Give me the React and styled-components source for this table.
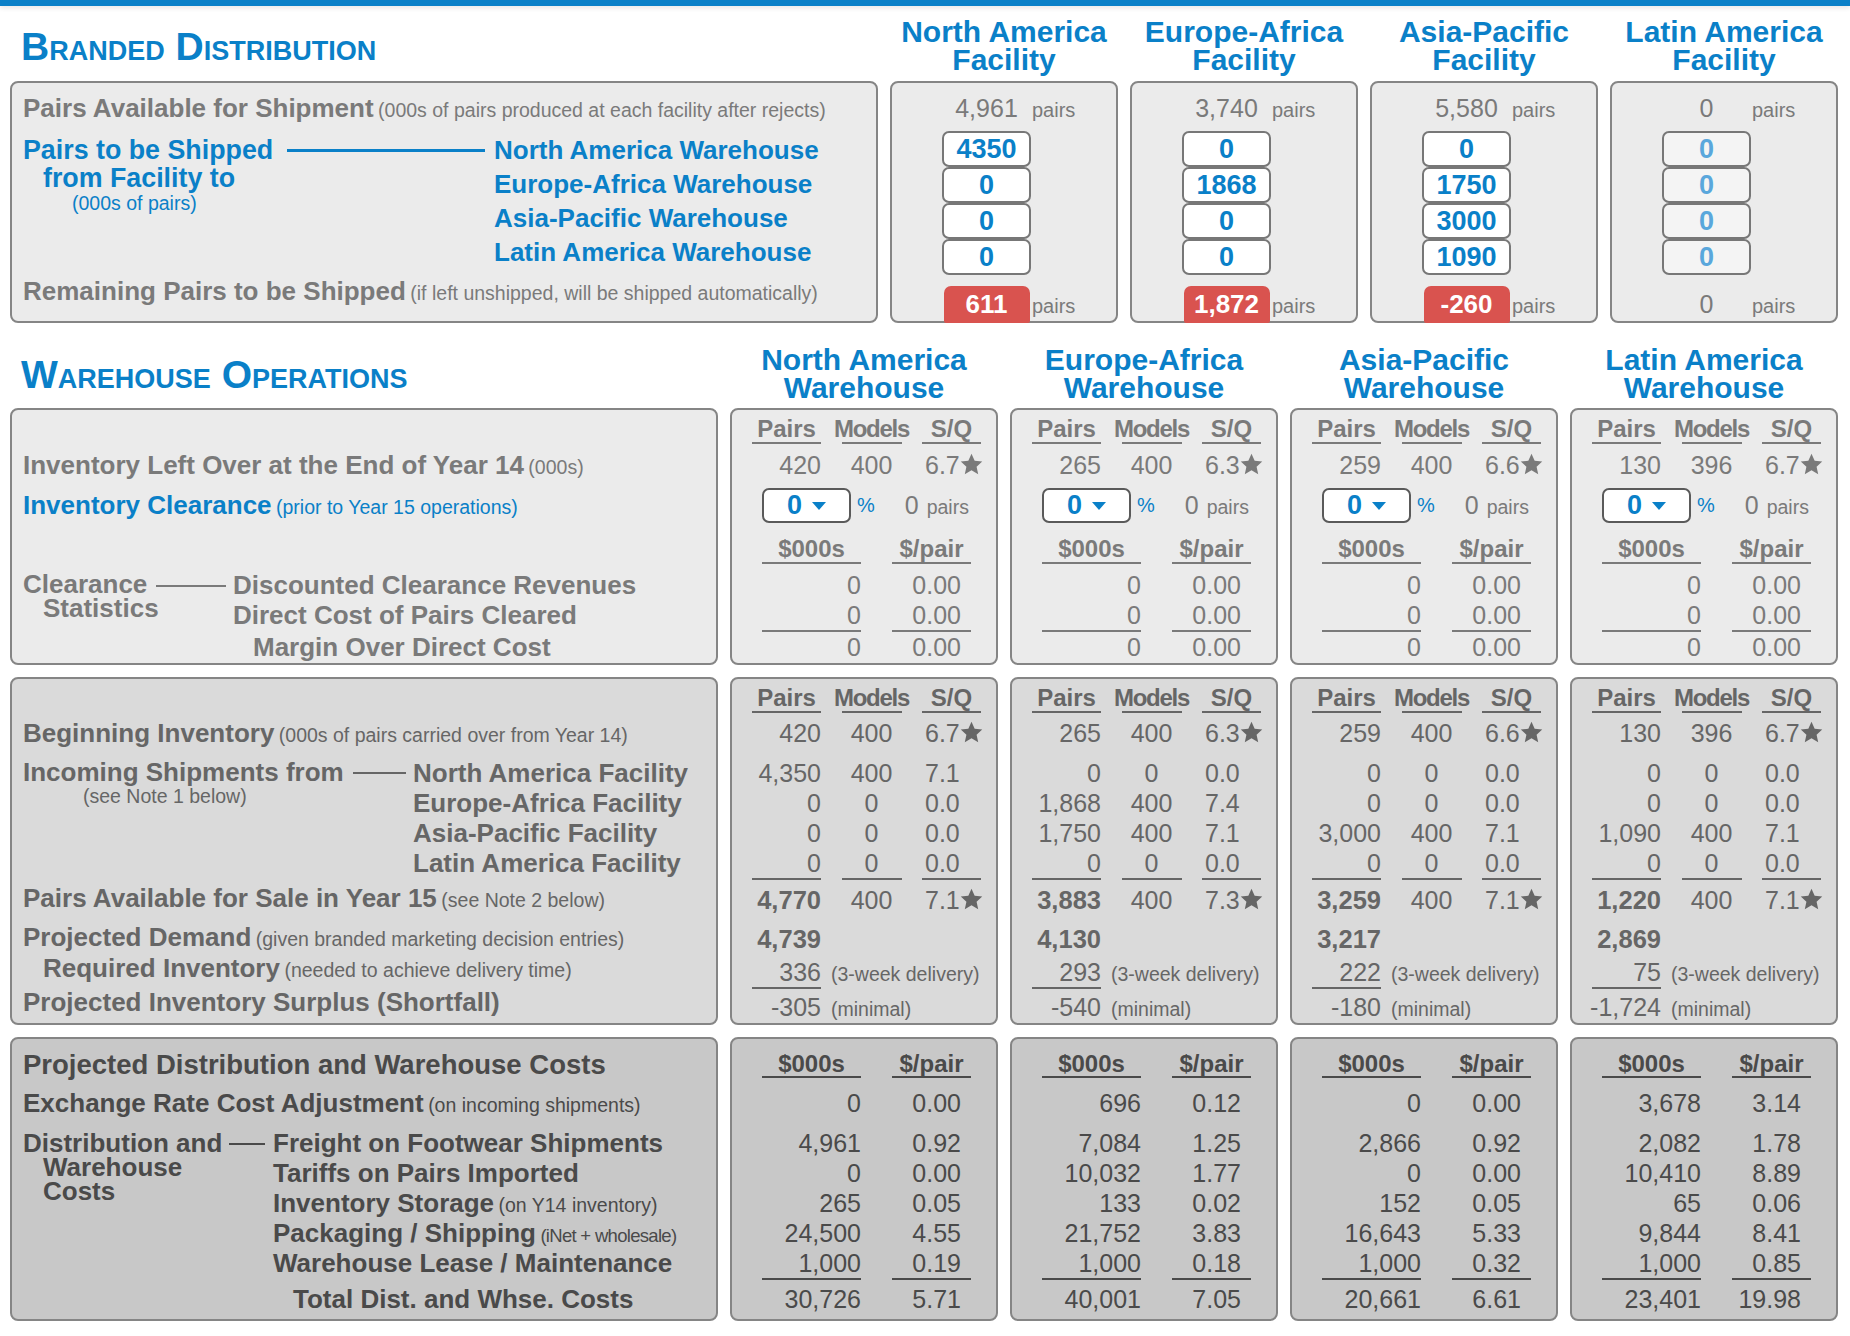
import React from 'react';
import styled, { createGlobalStyle } from 'styled-components';

const BLUE = '#0a80c8';

const tones = {
  light: { bg: '#ebebeb', fg: '#7a7a7a' },
  mid: { bg: '#dadada', fg: '#666666' },
  dark: { bg: '#c8c8c8', fg: '#4a4a4a' },
};

const facilities = [
  { name: 'North America', avail: '4,961', ship: ['4350', '0', '0', '0'], remain: '611', red: true },
  { name: 'Europe-Africa', avail: '3,740', ship: ['0', '1868', '0', '0'], remain: '1,872', red: true },
  { name: 'Asia-Pacific', avail: '5,580', ship: ['0', '1750', '3000', '1090'], remain: '-260', red: true },
  { name: 'Latin America', avail: '0', ship: ['0', '0', '0', '0'], remain: '0', off: true },
];

const warehouses = [
  {
    name: 'North America', left: ['420', '400', '6.7'],
    incoming: [['4,350', '400', '7.1'], ['0', '0', '0.0'], ['0', '0', '0.0'], ['0', '0', '0.0']],
    avail: ['4,770', '400', '7.1'], demand: '4,739', req: '336', surplus: '-305',
    fx: ['0', '0.00'],
    costs: [['4,961', '0.92'], ['0', '0.00'], ['265', '0.05'], ['24,500', '4.55'], ['1,000', '0.19']],
    total: ['30,726', '5.71'],
  },
  {
    name: 'Europe-Africa', left: ['265', '400', '6.3'],
    incoming: [['0', '0', '0.0'], ['1,868', '400', '7.4'], ['1,750', '400', '7.1'], ['0', '0', '0.0']],
    avail: ['3,883', '400', '7.3'], demand: '4,130', req: '293', surplus: '-540',
    fx: ['696', '0.12'],
    costs: [['7,084', '1.25'], ['10,032', '1.77'], ['133', '0.02'], ['21,752', '3.83'], ['1,000', '0.18']],
    total: ['40,001', '7.05'],
  },
  {
    name: 'Asia-Pacific', left: ['259', '400', '6.6'],
    incoming: [['0', '0', '0.0'], ['0', '0', '0.0'], ['3,000', '400', '7.1'], ['0', '0', '0.0']],
    avail: ['3,259', '400', '7.1'], demand: '3,217', req: '222', surplus: '-180',
    fx: ['0', '0.00'],
    costs: [['2,866', '0.92'], ['0', '0.00'], ['152', '0.05'], ['16,643', '5.33'], ['1,000', '0.32']],
    total: ['20,661', '6.61'],
  },
  {
    name: 'Latin America', left: ['130', '396', '6.7'],
    incoming: [['0', '0', '0.0'], ['0', '0', '0.0'], ['1,090', '400', '7.1'], ['0', '0', '0.0']],
    avail: ['1,220', '400', '7.1'], demand: '2,869', req: '75', surplus: '-1,724',
    fx: ['3,678', '3.14'],
    costs: [['2,082', '1.78'], ['10,410', '8.89'], ['65', '0.06'], ['9,844', '8.41'], ['1,000', '0.85']],
    total: ['23,401', '19.98'],
  },
];

const GlobalStyle = createGlobalStyle`
  * { box-sizing: border-box; }
  body {
    margin: 0;
    background: #fff;
    font-family: "Liberation Sans", Arial, Helvetica, sans-serif;
  }
`;

const TopBar = styled.div`
  height: 6px;
  background: ${BLUE};
  box-shadow: 0 2px 5px rgba(0, 0, 0, 0.1);
`;

const Page = styled.div`
  width: 1850px;
  padding: 0 12px 15px 10px;
`;

const Columns = styled.div`
  display: grid;
  grid-template-columns: ${({ $label }) => $label}px repeat(4, ${({ $col }) => $col}px);
  column-gap: 12px;
  margin-top: ${({ $mt }) => $mt || 0}px;
  height: ${({ $h }) => ($h ? `${$h}px` : 'auto')};
`;

const SectionTitle = styled.h2`
  margin: 0;
  padding-left: 11px;
  align-self: center;
  font-size: 39px;
  line-height: 39px;
  font-weight: 700;
  font-variant: small-caps;
  color: ${BLUE};
  white-space: nowrap;
`;

const ColHead = styled.h3`
  margin: 0;
  text-align: center;
  font-size: 30px;
  line-height: 28px;
  font-weight: 700;
  color: ${BLUE};
  white-space: nowrap;
`;

const Panel = styled.div`
  height: ${({ $h }) => $h}px;
  padding: ${({ $pt }) => $pt || 0}px 0 0 ${({ $pl }) => $pl || 0}px;
  border: 2px solid #858585;
  border-radius: 8px;
  background: ${({ $tone }) => tones[$tone].bg};
  color: ${({ $tone }) => tones[$tone].fg};
`;

/* label side */
const Row = styled.div`
  height: ${({ $h }) => $h || 30}px;
  line-height: ${({ $h }) => $h || 30}px;
  margin-top: ${({ $mt }) => $mt || 0}px;
  padding-left: ${({ $indent }) => $indent || 0}px;
  color: ${({ $blue }) => ($blue ? BLUE : 'inherit')};
  white-space: nowrap;
`;

const Strong = styled.span`
  font-size: ${({ $size }) => $size || 26}px;
  font-weight: 700;
`;

const Note = styled.span`
  font-size: ${({ $size }) => $size || 19.5}px;
  font-weight: 400;
  letter-spacing: ${({ $tight }) => ($tight ? '-0.7px' : 'normal')};
`;

const Bracket = styled.div`
  display: flex;
  margin-top: ${({ $mt }) => $mt || 0}px;
  color: ${({ $blue }) => ($blue ? BLUE : 'inherit')};
`;

const Lead = styled.div`
  flex: none;
  width: ${({ $w }) => $w}px;
  padding-top: ${({ $pt }) => $pt || 0}px;
  font-size: ${({ $size }) => $size || 26}px;
  font-weight: 700;
  line-height: ${({ $lh }) => $lh || 24}px;
  white-space: nowrap;
`;

const LeadLine = styled.div`
  padding-left: ${({ $indent }) => $indent || 0}px;
  ${({ $note, $lh }) => $note && `font-size: 19.5px; font-weight: 400; line-height: ${$lh}px;`}
`;

const Dash = styled.span`
  flex: none;
  width: ${({ $w }) => $w}px;
  height: ${({ $t }) => $t || 2}px;
  margin: ${({ $top }) => $top}px ${({ $r }) => $r}px 0 ${({ $l }) => $l || 0}px;
  background: currentColor;
`;

const Items = styled.div`
  display: flex;
  flex-direction: column;
  padding-top: ${({ $pt }) => $pt || 0}px;
`;

/* facility side */
const FacLine = styled.div`
  display: grid;
  grid-template-columns: 89px auto;
  align-items: baseline;
  height: ${({ $h }) => $h}px;
  line-height: ${({ $h }) => $h}px;
  margin-top: ${({ $mt }) => $mt || 0}px;
  padding-left: 50px;
  white-space: nowrap;
`;

const Amount = styled.span`
  justify-self: center;
  font-size: 25px;
`;

const Unit = styled.span`
  font-size: ${({ $size }) => $size || 20}px;
  padding-left: 1px;
`;

const QtyStack = styled.div`
  display: flex;
  flex-direction: column;
  width: 89px;
  margin: 5px 0 0 50px;
`;

const Qty = styled.input`
  display: block;
  width: 89px;
  height: 36px;
  padding: 0;
  border: 2px solid #777;
  border-radius: 7px;
  background: ${({ $off }) => ($off ? '#f4f4f4' : '#fff')};
  color: ${({ $off }) => ($off ? '#5aa7dc' : BLUE)};
  font: 700 27px/32px "Liberation Sans", Arial, sans-serif;
  text-align: center;
  outline: none;
`;

const Badge = styled.span`
  justify-self: center;
  display: inline-block;
  width: 86px;
  height: 37px;
  line-height: 37px;
  border-radius: 7px 7px 2px 2px;
  background: #d9534f;
  color: #fff;
  font-size: 26px;
  font-weight: 700;
  text-align: center;
`;

/* warehouse value side */
const Trio = styled.div`
  display: grid;
  grid-template-columns: 69px 60px 59px;
  column-gap: 20.5px;
  padding-left: 20px;
  margin-top: ${({ $mt }) => $mt || 0}px;
`;

const Duo = styled.div`
  display: grid;
  grid-template-columns: 99px 79px;
  column-gap: 31px;
  padding-left: 30px;
  margin-top: ${({ $mt }) => $mt || 0}px;
`;

const Head = styled.div`
  display: flex;
  justify-content: center;
  height: ${({ $h }) => $h || 26}px;
  line-height: ${({ $h }) => $h || 26}px;
  font-size: 24px;
  font-weight: 700;
  letter-spacing: ${({ $tight }) => ($tight ? '-1.3px' : 'normal')};
  border-bottom: 2px solid currentColor;
  box-sizing: content-box;
  white-space: nowrap;
`;

const Cell = styled.div`
  display: flex;
  justify-content: ${({ $a }) => ($a === 'l' ? 'flex-start' : $a === 'c' ? 'center' : 'flex-end')};
  height: 30px;
  line-height: 30px;
  padding: 0 ${({ $pr }) => $pr || 0}px 0 ${({ $pl }) => $pl || 0}px;
  font-size: ${({ $bold }) => ($bold ? 25.5 : 25)}px;
  font-weight: ${({ $bold }) => ($bold ? 700 : 400)};
  border-bottom: ${({ $rule }) => ($rule ? '2px solid currentColor' : '0')};
  box-sizing: content-box;
  white-space: nowrap;
`;

const StarIcon = styled.svg`
  flex: none;
  align-self: flex-start;
  width: 23px;
  height: 23px;
  margin-top: 3px;
`;

const ClearRow = styled.div`
  display: flex;
  align-items: center;
  height: 39px;
  margin-top: 6px;
  padding-left: 30px;
  white-space: nowrap;
`;

const Drop = styled.div`
  display: flex;
  align-items: center;
  justify-content: center;
  gap: 10px;
  width: 89px;
  height: 35px;
  border: 2px solid #5a5a5a;
  border-radius: 7px;
  background: #fff;
  color: ${BLUE};
  font-size: 27px;
  font-weight: 700;
`;

const Pct = styled.span`
  margin-left: 6px;
  font-size: 20px;
  color: ${BLUE};
`;

const Leftover = styled.span`
  margin-left: 30px;
  font-size: 25px;
`;

const Split = styled.div`
  display: flex;
  align-items: baseline;
  padding-left: 20px;
  margin-top: ${({ $mt }) => $mt || 0}px;
  white-space: nowrap;
`;

const SplitCell = styled(Cell)`
  flex: none;
  width: 69px;
`;

const SplitNote = styled.span`
  margin-left: 10px;
  font-size: 19.5px;
`;

const Caret = () => (
  <svg width="14" height="8" viewBox="0 0 14 8">
    <path d="M0 0h14L7 8z" fill="currentColor" />
  </svg>
);

const Star = () => (
  <StarIcon viewBox="0 0 24 24">
    <path
      d="M12 .8l3.3 7.3 7.9.8-5.9 5.4 1.7 7.8L12 18.1l-7 4 1.7-7.8L.8 8.9l7.9-.8z"
      fill="currentColor"
    />
  </StarIcon>
);

const SQ = ({ v, bold }) => (
  <Cell $a="l" $pl={3} $bold={bold}>
    {v}
    <Star />
  </Cell>
);

const FacilityPanel = ({ f }) => (
  <Panel $h={242} $pt={7} $tone="light">
    <FacLine $h={36}>
      <Amount>{f.avail}</Amount>
      <Unit>pairs</Unit>
    </FacLine>
    <QtyStack>
      {f.ship.map((v, i) => (
        <Qty key={i} defaultValue={v} readOnly $off={f.off} />
      ))}
    </QtyStack>
    <FacLine $h={37} $mt={11}>
      {f.red ? <Badge>{f.remain}</Badge> : <Amount>{f.remain}</Amount>}
      <Unit>pairs</Unit>
    </FacLine>
  </Panel>
);

const ClearancePanel = ({ w }) => (
  <Panel $h={257} $pt={6} $tone="light">
    <Trio>
      <Head>Pairs</Head>
      <Head $tight>Models</Head>
      <Head>S/Q</Head>
    </Trio>
    <Trio $mt={6}>
      <Cell>{w.left[0]}</Cell>
      <Cell $a="c">{w.left[1]}</Cell>
      <SQ v={w.left[2]} />
    </Trio>
    <ClearRow>
      <Drop>
        <span>0</span>
        <Caret />
      </Drop>
      <Pct>%</Pct>
      <Leftover>
        0 <Unit $size={19.5}>pairs</Unit>
      </Leftover>
    </ClearRow>
    <Duo $mt={11}>
      <Head>$000s</Head>
      <Head>$/pair</Head>
    </Duo>
    <Duo $mt={6}>
      <Cell>0</Cell>
      <Cell $pr={10}>0.00</Cell>
      <Cell $rule>0</Cell>
      <Cell $rule $pr={10}>0.00</Cell>
      <Cell>0</Cell>
      <Cell $pr={10}>0.00</Cell>
    </Duo>
  </Panel>
);

const InventoryPanel = ({ w }) => (
  <Panel $h={348} $pt={6} $tone="mid">
    <Trio>
      <Head>Pairs</Head>
      <Head $tight>Models</Head>
      <Head>S/Q</Head>
    </Trio>
    <Trio $mt={5}>
      <Cell>{w.left[0]}</Cell>
      <Cell $a="c">{w.left[1]}</Cell>
      <SQ v={w.left[2]} />
    </Trio>
    <Trio $mt={10}>
      {w.incoming.map((r, i) => (
        <React.Fragment key={i}>
          <Cell $rule={i === 3}>{r[0]}</Cell>
          <Cell $a="c" $rule={i === 3}>{r[1]}</Cell>
          <Cell $a="l" $pl={3} $rule={i === 3}>{r[2]}</Cell>
        </React.Fragment>
      ))}
    </Trio>
    <Trio $mt={5}>
      <Cell $bold>{w.avail[0]}</Cell>
      <Cell $a="c">{w.avail[1]}</Cell>
      <SQ v={w.avail[2]} />
    </Trio>
    <Trio $mt={9}>
      <Cell $bold>{w.demand}</Cell>
    </Trio>
    <Split $mt={3}>
      <SplitCell $rule>{w.req}</SplitCell>
      <SplitNote>(3-week delivery)</SplitNote>
    </Split>
    <Split $mt={3}>
      <SplitCell>{w.surplus}</SplitCell>
      <SplitNote>(minimal)</SplitNote>
    </Split>
  </Panel>
);

const CostPanel = ({ w }) => (
  <Panel $h={284} $pt={12} $tone="dark">
    <Duo>
      <Head $h={25}>$000s</Head>
      <Head $h={25}>$/pair</Head>
    </Duo>
    <Duo $mt={10}>
      <Cell>{w.fx[0]}</Cell>
      <Cell $pr={10}>{w.fx[1]}</Cell>
    </Duo>
    <Duo $mt={10}>
      {w.costs.map((r, i) => (
        <React.Fragment key={i}>
          <Cell $rule={i === 4}>{r[0]}</Cell>
          <Cell $rule={i === 4} $pr={10}>{r[1]}</Cell>
        </React.Fragment>
      ))}
    </Duo>
    <Duo $mt={4}>
      <Cell>{w.total[0]}</Cell>
      <Cell $pr={10}>{w.total[1]}</Cell>
    </Duo>
  </Panel>
);

const App = () => (
  <>
    <GlobalStyle />
    <TopBar />
    <Page>
      <Columns $label={868} $col={228} $mt={12} $h={56}>
        <SectionTitle>Branded Distribution</SectionTitle>
        {facilities.map((f) => (
          <ColHead key={f.name}>
            {f.name}
            <br />
            Facility
          </ColHead>
        ))}
      </Columns>

      <Columns $label={868} $col={228} $mt={7}>
        <Panel $h={242} $pt={7} $pl={11} $tone="light">
          <Row $h={36}>
            <Strong>Pairs Available for Shipment</Strong>{' '}
            <Note>(000s of pairs produced at each facility after rejects)</Note>
          </Row>
          <Bracket $blue $mt={5}>
            <Lead $w={264} $pt={5} $lh={28} $size={26.8}>
              <LeadLine>Pairs to be Shipped</LeadLine>
              <LeadLine $indent={20}>from Facility to</LeadLine>
              <LeadLine $indent={49} $note $lh={22}>(000s of pairs)</LeadLine>
            </Lead>
            <Dash $w={198} $t={3} $top={17.5} $r={9} />
            <Items $pt={2}>
              <Row $h={34}><Strong>North America Warehouse</Strong></Row>
              <Row $h={34}><Strong>Europe-Africa Warehouse</Strong></Row>
              <Row $h={34}><Strong>Asia-Pacific Warehouse</Strong></Row>
              <Row $h={34}><Strong>Latin America Warehouse</Strong></Row>
            </Items>
          </Bracket>
          <Row $h={36} $mt={4}>
            <Strong>Remaining Pairs to be Shipped</Strong>{' '}
            <Note>(if left unshipped, will be shipped automatically)</Note>
          </Row>
        </Panel>
        {facilities.map((f) => (
          <FacilityPanel key={f.name} f={f} />
        ))}
      </Columns>

      <Columns $label={708} $col={268} $mt={23} $h={56}>
        <SectionTitle>Warehouse Operations</SectionTitle>
        {warehouses.map((w) => (
          <ColHead key={w.name}>
            {w.name}
            <br />
            Warehouse
          </ColHead>
        ))}
      </Columns>

      <Columns $label={708} $col={268} $mt={6}>
        <Panel $h={257} $pt={6} $pl={11} $tone="light">
          <Row $mt={34}>
            <Strong>Inventory Left Over at the End of Year 14</Strong> <Note>(000s)</Note>
          </Row>
          <Row $h={39} $mt={6} $blue>
            <Strong>Inventory Clearance</Strong> <Note>(prior to Year 15 operations)</Note>
          </Row>
          <Bracket $mt={45}>
            <Lead $w={125} $pt={2}>
              <LeadLine>Clearance</LeadLine>
              <LeadLine $indent={20}>Statistics</LeadLine>
            </Lead>
            <Dash $w={70} $top={15} $l={8} $r={7} />
            <Items>
              <Row><Strong>Discounted Clearance Revenues</Strong></Row>
              <Row><Strong>Direct Cost of Pairs Cleared</Strong></Row>
              <Row $mt={2} $indent={20}><Strong>Margin Over Direct Cost</Strong></Row>
            </Items>
          </Bracket>
        </Panel>
        {warehouses.map((w) => (
          <ClearancePanel key={w.name} w={w} />
        ))}
      </Columns>

      <Columns $label={708} $col={268} $mt={12}>
        <Panel $h={348} $pt={6} $pl={11} $tone="mid">
          <Row $mt={33}>
            <Strong>Beginning Inventory</Strong> <Note>(000s of pairs carried over from Year 14)</Note>
          </Row>
          <Bracket $mt={10}>
            <Lead $w={317} $lh={28}>
              <LeadLine>Incoming Shipments from</LeadLine>
              <LeadLine $indent={60} $note $lh={20}>(see Note 1 below)</LeadLine>
            </Lead>
            <Dash $w={53} $top={14} $l={13} $r={7} />
            <Items>
              <Row><Strong>North America Facility</Strong></Row>
              <Row><Strong>Europe-Africa Facility</Strong></Row>
              <Row><Strong>Asia-Pacific Facility</Strong></Row>
              <Row><Strong>Latin America Facility</Strong></Row>
            </Items>
          </Bracket>
          <Row $mt={5}>
            <Strong>Pairs Available for Sale in Year 15</Strong> <Note>(see Note 2 below)</Note>
          </Row>
          <Row $mt={9}>
            <Strong>Projected Demand</Strong> <Note>(given branded marketing decision entries)</Note>
          </Row>
          <Row $mt={1} $indent={20}>
            <Strong>Required Inventory</Strong> <Note>(needed to achieve delivery time)</Note>
          </Row>
          <Row $mt={4}>
            <Strong>Projected Inventory Surplus (Shortfall)</Strong>
          </Row>
        </Panel>
        {warehouses.map((w) => (
          <InventoryPanel key={w.name} w={w} />
        ))}
      </Columns>

      <Columns $label={708} $col={268} $mt={12}>
        <Panel $h={284} $pt={12} $pl={11} $tone="dark">
          <Row $h={27}>
            <Strong $size={27.5}>Projected Distribution and Warehouse Costs</Strong>
          </Row>
          <Row $mt={10}>
            <Strong>Exchange Rate Cost Adjustment</Strong> <Note>(on incoming shipments)</Note>
          </Row>
          <Bracket $mt={10}>
            <Lead $w={198} $pt={3}>
              <LeadLine>Distribution and</LeadLine>
              <LeadLine $indent={20}>Warehouse</LeadLine>
              <LeadLine $indent={20}>Costs</LeadLine>
            </Lead>
            <Dash $w={36} $top={15} $l={8} $r={8} />
            <Items>
              <Row><Strong>Freight on Footwear Shipments</Strong></Row>
              <Row><Strong>Tariffs on Pairs Imported</Strong></Row>
              <Row>
                <Strong>Inventory Storage</Strong> <Note>(on Y14 inventory)</Note>
              </Row>
              <Row>
                <Strong>Packaging / Shipping</Strong> <Note $size={18.5} $tight>(iNet + wholesale)</Note>
              </Row>
              <Row><Strong>Warehouse Lease / Maintenance</Strong></Row>
            </Items>
          </Bracket>
          <Row $mt={6} $indent={270}>
            <Strong>Total Dist. and Whse. Costs</Strong>
          </Row>
        </Panel>
        {warehouses.map((w) => (
          <CostPanel key={w.name} w={w} />
        ))}
      </Columns>
    </Page>
  </>
);

export default App;
